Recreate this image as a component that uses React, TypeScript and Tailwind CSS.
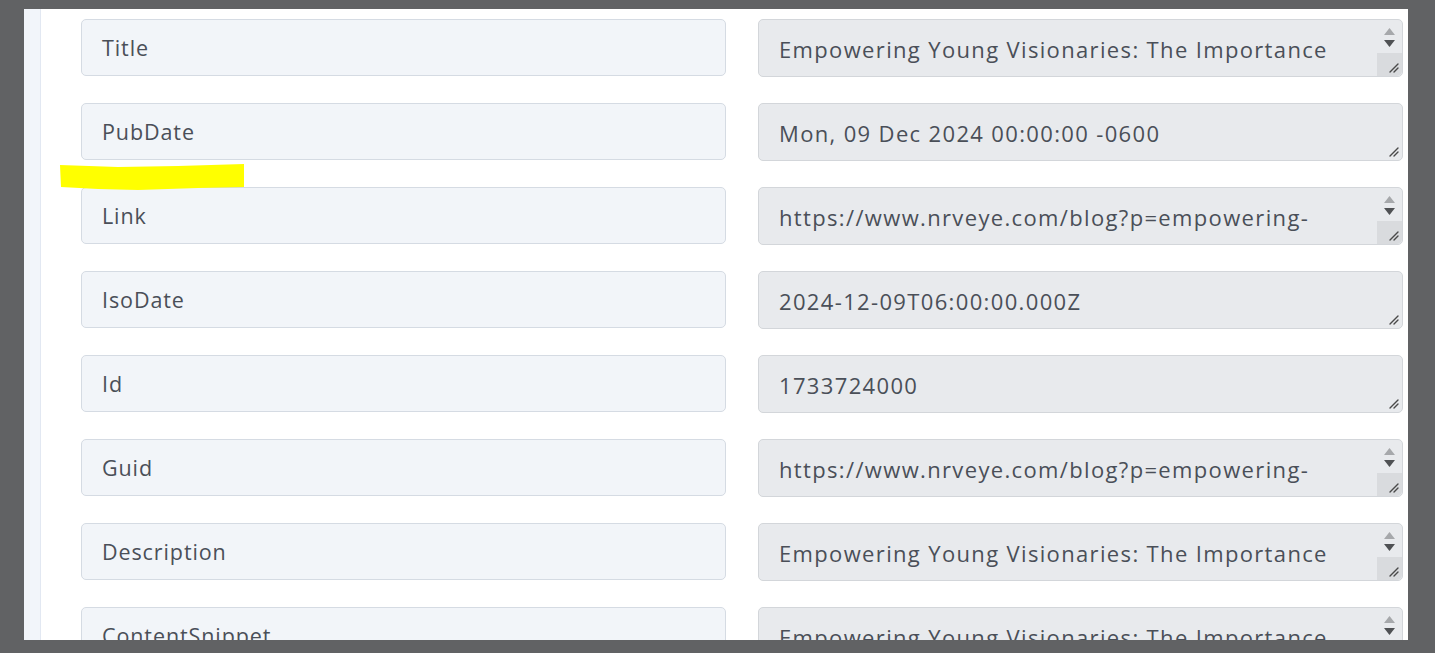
import type { ReactNode } from 'react';

interface FieldRow {
  label: string;
  value: string;
  scroll: boolean;
}

const rows: FieldRow[] = [
  { label: 'Title', value: 'Empowering Young Visionaries: The Importance', scroll: true },
  { label: 'PubDate', value: 'Mon, 09 Dec 2024 00:00:00 -0600', scroll: false },
  { label: 'Link', value: 'https://www.nrveye.com/blog?p=empowering-', scroll: true },
  { label: 'IsoDate', value: '2024-12-09T06:00:00.000Z', scroll: false },
  { label: 'Id', value: '1733724000', scroll: false },
  { label: 'Guid', value: 'https://www.nrveye.com/blog?p=empowering-', scroll: true },
  { label: 'Description', value: 'Empowering Young Visionaries: The Importance', scroll: true },
  { label: 'ContentSnippet', value: 'Empowering Young Visionaries: The Importance', scroll: true },
];

const font = { fontFamily: '"Open Sans", "Noto Sans", sans-serif' };

function ResizeGrip() {
  return (
    <svg className="absolute bottom-[3px] right-[3px] h-[11px] w-[11px]" viewBox="0 0 11 11" aria-hidden="true">
      <path d="M2 10 L10 2 M6 10 L10 6" stroke="#4a4a4a" strokeWidth="1.4" strokeLinecap="round" />
    </svg>
  );
}

// Classic scrollbar with arrow buttons and a thumb that sits over the grip corner
function ScrollBar() {
  return (
    <div className="absolute bottom-0 right-0 top-0 flex w-[25px] flex-col items-center rounded-r-[5px]">
      <svg className="mt-[8px] h-[7px] w-[11px]" viewBox="0 0 11 7" aria-hidden="true">
        <path d="M5.5 0 L11 7 L0 7 Z" fill="#a6a8ab" />
      </svg>
      <svg className="mt-[5px] h-[7px] w-[11px]" viewBox="0 0 11 7" aria-hidden="true">
        <path d="M0 0 L11 0 L5.5 7 Z" fill="#4f5154" />
      </svg>
      <div className="mt-[6px] w-full flex-1 rounded-br-[5px] bg-[#d9dbde]" />
    </div>
  );
}

function Box({ children, className }: { children: ReactNode; className: string }) {
  return (
    <div className={`relative flex items-start overflow-hidden rounded-[5px] border pl-[20px] pt-[14px] leading-[28px] text-[#4a4f58] ${className}`}>
      {children}
    </div>
  );
}

export default function App() {
  return (
    <div className="relative h-[653px] w-[1435px] overflow-hidden bg-[#616264] pl-[24px] pr-[27px] pt-[9px]" style={font}>
      <div className="flex h-[631px] overflow-hidden bg-white">
        <div className="w-[17px] shrink-0 border-r border-[#e2e8f2] bg-[#f2f5fa]" />
        <div className="flex flex-1 flex-col gap-[26px] pl-[40px] pr-[5px] pt-[10px]">
          {rows.map((row) => (
            <div key={row.label} className="grid shrink-0 grid-cols-2 items-start gap-[32px]">
              <Box className="h-[57px] border-[#d5dbe3] bg-[#f2f5f9] text-[21.5px] tracking-[0.9px]">{row.label}</Box>
              <Box className="h-[58px] border-[#d3d6da] bg-[#e8eaed] pt-[15px] text-[22px] tracking-[1.35px]">
                <span className="whitespace-nowrap">{row.value}</span>
                {row.scroll && <ScrollBar />}
                <ResizeGrip />
              </Box>
            </div>
          ))}
        </div>
      </div>

      {/* marker highlight */}
      <svg className="absolute left-[58px] top-[162px] h-[30px] w-[188px]" viewBox="0 0 188 30" aria-hidden="true">
        <path
          d="M2 3 L60 5 L120 4 L186 2 L186 25 L140 26 L80 28 L40 27 L3 25 Z"
          fill="#ffff00"
        />
      </svg>
    </div>
  );
}
